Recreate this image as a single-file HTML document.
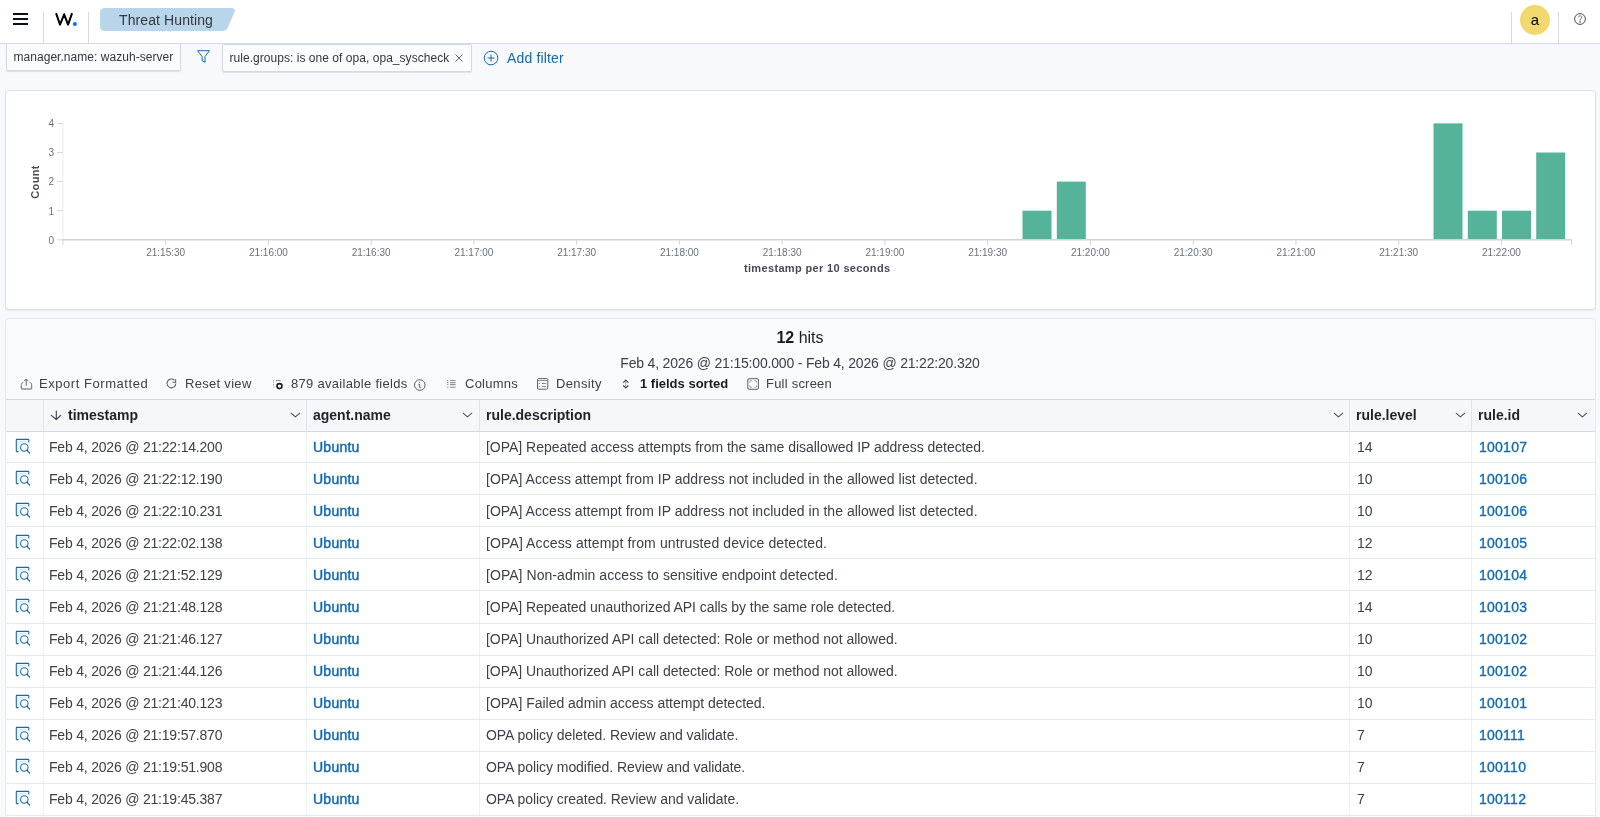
<!DOCTYPE html>
<html><head><meta charset="utf-8"><style>
*{box-sizing:border-box;margin:0;padding:0}
html,body{width:1600px;height:817px;overflow:hidden;background:#f8f9fc;font-family:"Liberation Sans",sans-serif;color:#343741;position:relative}
.abs{position:absolute}
.g,.td,.th,.tb,.pill,#header>div,svg{will-change:transform}
#header{position:absolute;left:0;top:0;width:1600px;height:44px;background:#fff;border-bottom:1px solid #d3dae6}
.vdiv{position:absolute;top:12px;width:1px;height:31px;background:#d3dae6}
.pill{position:absolute;height:28px;background:#fbfcfd;border:1px solid #d3dae6;border-radius:2px;box-shadow:0 1px 1px rgba(0,0,0,.1);font-size:12px;line-height:27px;padding-left:6.5px;color:#343741;white-space:nowrap}
.panel{position:absolute;background:#fff;border:1px solid #dde2ea;border-radius:4px;box-shadow:0 1px 2px rgba(0,0,0,.08)}
.hdr{position:absolute;left:6px;top:399px;width:1589px;height:33px;background:#f5f7fa;border-top:1px solid #d3dae6;border-bottom:1px solid #d3dae6}
.vl{position:absolute;width:1px;background:#e3e8f2}
.hl{position:absolute;left:6px;width:1589px;height:1px;background:#e3e8f2}
.th{position:absolute;height:32px;line-height:32px;font-size:14px;font-weight:700;color:#1f2229;white-space:nowrap}
.chev{position:absolute;width:12px;height:8px}
.td{position:absolute;height:32px;line-height:32px;font-size:14px;color:#3d404a;white-space:nowrap;letter-spacing:-0.05px}
.ts{letter-spacing:-0.2px}
.lnk{color:#0f6ab4;-webkit-text-stroke:0.45px #0f6ab4;letter-spacing:0.25px}
.lnk2{color:#0f6ab4;-webkit-text-stroke:0.35px #0f6ab4;letter-spacing:0.25px}
.ic{position:absolute;width:22px;height:22px}
.tb{position:absolute;top:375px;height:18px;line-height:18px;font-size:13px;color:#3d404a;white-space:nowrap;letter-spacing:0.3px}
</style></head><body>
<div id="header">
  <div class="abs" style="left:13px;top:13px;width:15px;height:2px;background:#07101f"></div>
  <div class="abs" style="left:13px;top:18px;width:15px;height:2px;background:#07101f"></div>
  <div class="abs" style="left:13px;top:23px;width:15px;height:2px;background:#07101f"></div>
  <div class="vdiv" style="left:43px"></div>
  <svg class="abs" style="left:50px;top:8px" width="30" height="22" viewBox="0 0 30 22"><path d="M6.3 5.85L10 16.6 14.15 6.3 18.06 16.6 21.85 5.85" fill="none" stroke="#000" stroke-width="2" stroke-linejoin="round" stroke-linecap="round"/><circle cx="24.9" cy="16" r="2" fill="#0a6cff"/></svg>
  <div class="vdiv" style="left:88px"></div>
  <svg class="abs" style="left:100px;top:8px" width="136" height="23"><path d="M5 0H131Q136 0 134.5 4L128 19Q126.5 23 122 23H5Q0 23 0 18V5Q0 0 5 0Z" fill="#b9d5ea"/></svg>
  <div class="abs" style="left:119px;top:8.5px;line-height:23px;font-size:14px;color:#343741;letter-spacing:0.1px">Threat Hunting</div>
  <div class="vdiv" style="left:1511px"></div>
  <div class="abs" style="left:1519.5px;top:4.5px;width:30px;height:30px;border-radius:50%;background:#f1d86f;text-align:center;line-height:30px;font-size:15px;color:#000">a</div>
  <div class="vdiv" style="left:1558px"></div>
  <svg class="abs" style="left:1573.4px;top:12.4px" width="14" height="14" viewBox="0 0 14 14"><circle cx="7" cy="7" r="5.4" fill="none" stroke="#4a4e58" stroke-width="1"/><path d="M5.5 5.3a1.55 1.55 0 1 1 2.3 1.4c-.5.3-.75.7-.75 1.3v.5" fill="none" stroke="#5a5e68" stroke-width=".9"/><circle cx="7.05" cy="10.1" r=".75" fill="#1a1c21"/></svg>
</div>
<div class="pill" style="left:6px;top:43px;width:175px;letter-spacing:0.04px">manager.name: wazuh-server</div>
<svg class="abs" style="left:196px;top:49px" width="15" height="15" viewBox="0 0 15 15"><path d="M1.5 1.7h12L9 7.5v5.8l-2.9-1.6V7.5z" fill="none" stroke="#0f6ab4" stroke-width="1" stroke-linejoin="round"/></svg>
<div class="pill" style="left:222px;top:44px;width:250px;letter-spacing:0.04px">rule.groups: is one of opa, opa_syscheck</div>
<svg class="abs" style="left:454px;top:52.5px" width="10" height="10" viewBox="0 0 10 10"><path d="M1.5 1.5l7 7M8.5 1.5l-7 7" stroke="#5a5e68" stroke-width=".95"/></svg>
<svg class="abs" style="left:483px;top:49.5px" width="16" height="16" viewBox="0 0 16 16"><circle cx="8" cy="8" r="6.8" fill="none" stroke="#0f6ab4" stroke-width="1"/><path d="M8 4.5v7M4.5 8h7" stroke="#0f6ab4" stroke-width="1"/></svg>
<div class="abs g" style="left:507px;top:49px;font-size:14px;line-height:18px;color:#0f6ab4;letter-spacing:0.15px">Add filter</div>

<div class="panel" style="left:5px;top:90px;width:1591px;height:220px"></div>
<svg width="1600" height="300" style="position:absolute;left:0;top:0" font-family="Liberation Sans, sans-serif"><line x1="62.9" y1="122.4" x2="62.9" y2="239.8" stroke="#ececec" stroke-width="1"/><line x1="57" y1="239.8" x2="62.9" y2="239.8" stroke="#d8d8d8" stroke-width="1"/><text x="54" y="243.6" text-anchor="end" font-size="10" fill="#6a717d">0</text><line x1="57" y1="210.7" x2="62.9" y2="210.7" stroke="#d8d8d8" stroke-width="1"/><text x="54" y="214.5" text-anchor="end" font-size="10" fill="#6a717d">1</text><line x1="57" y1="181.6" x2="62.9" y2="181.6" stroke="#d8d8d8" stroke-width="1"/><text x="54" y="185.4" text-anchor="end" font-size="10" fill="#6a717d">2</text><line x1="57" y1="152.5" x2="62.9" y2="152.5" stroke="#d8d8d8" stroke-width="1"/><text x="54" y="156.3" text-anchor="end" font-size="10" fill="#6a717d">3</text><line x1="57" y1="123.4" x2="62.9" y2="123.4" stroke="#d8d8d8" stroke-width="1"/><text x="54" y="127.2" text-anchor="end" font-size="10" fill="#6a717d">4</text><rect x="1022.5" y="210.7" width="29" height="29.1" fill="#54b399"/><rect x="1056.8" y="181.6" width="29" height="58.2" fill="#54b399"/><rect x="1433.5" y="123.4" width="29" height="116.4" fill="#54b399"/><rect x="1467.8" y="210.7" width="29" height="29.1" fill="#54b399"/><rect x="1502.0" y="210.7" width="29" height="29.1" fill="#54b399"/><rect x="1536.2" y="152.5" width="29" height="87.3" fill="#54b399"/><line x1="62.9" y1="239.8" x2="1571.6" y2="239.8" stroke="#d4d4d4" stroke-width="1.5"/><line x1="62.9" y1="239.8" x2="62.9" y2="244.8" stroke="#d4d4d4" stroke-width="1"/><line x1="1571.6" y1="239.8" x2="1571.6" y2="244.8" stroke="#d4d4d4" stroke-width="1"/><line x1="165.7" y1="239.8" x2="165.7" y2="244.8" stroke="#d4d4d4" stroke-width="1"/><text x="165.7" y="256.0" text-anchor="middle" font-size="10" fill="#6a717d">21:15:30</text><line x1="268.4" y1="239.8" x2="268.4" y2="244.8" stroke="#d4d4d4" stroke-width="1"/><text x="268.4" y="256.0" text-anchor="middle" font-size="10" fill="#6a717d">21:16:00</text><line x1="371.1" y1="239.8" x2="371.1" y2="244.8" stroke="#d4d4d4" stroke-width="1"/><text x="371.1" y="256.0" text-anchor="middle" font-size="10" fill="#6a717d">21:16:30</text><line x1="473.9" y1="239.8" x2="473.9" y2="244.8" stroke="#d4d4d4" stroke-width="1"/><text x="473.9" y="256.0" text-anchor="middle" font-size="10" fill="#6a717d">21:17:00</text><line x1="576.6" y1="239.8" x2="576.6" y2="244.8" stroke="#d4d4d4" stroke-width="1"/><text x="576.6" y="256.0" text-anchor="middle" font-size="10" fill="#6a717d">21:17:30</text><line x1="679.4" y1="239.8" x2="679.4" y2="244.8" stroke="#d4d4d4" stroke-width="1"/><text x="679.4" y="256.0" text-anchor="middle" font-size="10" fill="#6a717d">21:18:00</text><line x1="782.1" y1="239.8" x2="782.1" y2="244.8" stroke="#d4d4d4" stroke-width="1"/><text x="782.1" y="256.0" text-anchor="middle" font-size="10" fill="#6a717d">21:18:30</text><line x1="884.9" y1="239.8" x2="884.9" y2="244.8" stroke="#d4d4d4" stroke-width="1"/><text x="884.9" y="256.0" text-anchor="middle" font-size="10" fill="#6a717d">21:19:00</text><line x1="987.6" y1="239.8" x2="987.6" y2="244.8" stroke="#d4d4d4" stroke-width="1"/><text x="987.6" y="256.0" text-anchor="middle" font-size="10" fill="#6a717d">21:19:30</text><line x1="1090.4" y1="239.8" x2="1090.4" y2="244.8" stroke="#d4d4d4" stroke-width="1"/><text x="1090.4" y="256.0" text-anchor="middle" font-size="10" fill="#6a717d">21:20:00</text><line x1="1193.2" y1="239.8" x2="1193.2" y2="244.8" stroke="#d4d4d4" stroke-width="1"/><text x="1193.2" y="256.0" text-anchor="middle" font-size="10" fill="#6a717d">21:20:30</text><line x1="1295.9" y1="239.8" x2="1295.9" y2="244.8" stroke="#d4d4d4" stroke-width="1"/><text x="1295.9" y="256.0" text-anchor="middle" font-size="10" fill="#6a717d">21:21:00</text><line x1="1398.7" y1="239.8" x2="1398.7" y2="244.8" stroke="#d4d4d4" stroke-width="1"/><text x="1398.7" y="256.0" text-anchor="middle" font-size="10" fill="#6a717d">21:21:30</text><line x1="1501.4" y1="239.8" x2="1501.4" y2="244.8" stroke="#d4d4d4" stroke-width="1"/><text x="1501.4" y="256.0" text-anchor="middle" font-size="10" fill="#6a717d">21:22:00</text><text x="817.2" y="272.2" text-anchor="middle" font-size="11" font-weight="700" fill="#464a55" letter-spacing="0.35">timestamp per 10 seconds</text><text transform="translate(38.5,182) rotate(-90)" text-anchor="middle" font-size="11" font-weight="700" fill="#464a55" letter-spacing="0.3">Count</text></svg>

<div class="panel" style="left:5px;top:318px;width:1591px;height:520px;background:#f9fafc;border-color:#e6e9ef;box-shadow:none;border-radius:4px 4px 0 0"></div>
<div class="abs g" style="left:0;top:328px;width:1600px;text-align:center;font-size:16px;line-height:20px;color:#1a1c21"><b>12</b> hits</div>
<div class="abs g" style="left:0;top:353.5px;width:1600px;text-align:center;font-size:14px;line-height:18px;color:#3d404a;letter-spacing:-0.18px">Feb 4, 2026 @ 21:15:00.000 - Feb 4, 2026 @ 21:22:20.320</div>

<svg class="abs" style="left:16px;top:374px" width="20" height="20" viewBox="0 0 20 20"><path d="M7.3 8.2C6 8.8 5.3 10 5.3 11.5v3a.5.5 0 0 0 .5.5h9.4a.5.5 0 0 0 .5-.5v-3c0-1.5-.7-2.7-2-3.3" fill="none" stroke="#5a5f6b" stroke-width="1"/><path d="M10.2 11.8V5.3M8.2 7l2-2 2 2" fill="none" stroke="#5a5f6b" stroke-width="1" stroke-linejoin="round"/></svg>
<svg class="abs" style="left:162px;top:374px" width="20" height="20" viewBox="0 0 20 20"><path d="M12.4 6.2A4.4 4.4 0 1 0 13.8 9.5" fill="none" stroke="#5a5f6b" stroke-width="1.1"/><path d="M13.6 5.2v3.1h-3" fill="none" stroke="#5a5f6b" stroke-width="1.1"/></svg>
<svg class="abs" style="left:268px;top:374px" width="20" height="20" viewBox="0 0 20 20"><path d="M5 6.5h.8M5 8.6h.8M5 10.7h.8M5 12.9h.8M7.8 6.5h5" stroke="#8a8f99" stroke-width="1"/><circle cx="11.5" cy="12.1" r="2.5" fill="none" stroke="#1a1c21" stroke-width="1.6"/></svg>
<svg class="abs" style="left:410px;top:374px" width="20" height="20" viewBox="0 0 20 20"><circle cx="9.8" cy="11" r="5.3" fill="none" stroke="#5a5f6b" stroke-width="1"/><path d="M8.3 10.3h1.4v3.4h1.1" fill="none" stroke="#5a5f6b" stroke-width="1"/><circle cx="9.7" cy="8.3" r=".6" fill="#5a5f6b"/></svg>
<svg class="abs" style="left:441px;top:374px" width="20" height="20" viewBox="0 0 20 20"><path d="M6 6.5h1.4M9 6.5h5.6M6 8.6h1.4M9 8.6h5.6M6 10.5h1.4M9 10.5h5.6M6 13.3h1.4M9 13.3h5.6" stroke="#8f949e" stroke-width="1.1"/><path d="M9 12h5.6" stroke="#c9ccd3" stroke-width="1"/></svg>
<svg class="abs" style="left:532px;top:374px" width="20" height="20" viewBox="0 0 20 20"><rect x="5.5" y="4.6" width="10.3" height="10.6" rx="1.2" fill="none" stroke="#5a5f6b" stroke-width="1"/><path d="M5.5 6.5h10.3" stroke="#7d828c" stroke-width=".9"/><path d="M6.8 9.5h1.1M9.8 9.5h4.2M6.8 12.5h1.1M9.8 12.5h4.2" stroke="#80858f" stroke-width="1"/></svg>
<svg class="abs" style="left:616px;top:374px" width="20" height="20" viewBox="0 0 20 20"><path d="M7.2 8.6l2.6-2.4 2.6 2.4M7.2 11.5l2.6 2.4 2.6-2.4" fill="none" stroke="#343741" stroke-width="1.1" stroke-linejoin="round"/><path d="M9.8 7v6.2" stroke="#9a9ea6" stroke-width="1"/></svg>
<svg class="abs" style="left:743px;top:374px" width="20" height="20" viewBox="0 0 20 20"><rect x="4.8" y="4.7" width="10.6" height="10.6" rx="1.2" fill="none" stroke="#5a5f6b" stroke-width="1"/><path d="M6.8 8.6V7.6a1 1 0 0 1 1-1h1M11.6 6.6h.9a1 1 0 0 1 1 1v1M13.5 11.4v1a1 1 0 0 1-1 1h-.9M8.8 13.4h-1a1 1 0 0 1-1-1v-1" fill="none" stroke="#8a8f99" stroke-width="1"/></svg>

<div class="tb" style="left:39px;letter-spacing:0.55px">Export Formatted</div>
<div class="tb" style="left:184.8px">Reset view</div>
<div class="tb" style="left:290.5px">879 available fields</div>
<div class="tb" style="left:465px;letter-spacing:0.25px">Columns</div>
<div class="tb" style="left:556px;letter-spacing:0.35px">Density</div>
<div class="tb" style="left:640px;font-weight:700;letter-spacing:0;color:#1a1c21">1 fields sorted</div>
<div class="tb" style="left:766px;letter-spacing:0.22px">Full screen</div>
<div class="abs" style="left:6px;top:432px;width:1589px;height:385px;background:#fff"></div>
<div class="hdr"></div><div class="vl" style="left:43px;top:400px;height:31px;background:#dfe4ee"></div><div class="vl" style="left:43px;top:432px;height:385px;background:#eef1f6"></div><div class="th" style="left:68px;top:399px">timestamp</div><div class="chev" style="left:290px;top:412px"><svg width="12" height="8" viewBox="0 0 12 8" style="position:absolute;left:0;top:0"><path d="M1.2 1.2l4.2 3.7 4.4-3.7" fill="none" stroke="#4a4e58" stroke-width="1.05" stroke-linecap="round" stroke-linejoin="round"/></svg></div><div class="vl" style="left:306px;top:400px;height:31px;background:#dfe4ee"></div><div class="vl" style="left:306px;top:432px;height:385px;background:#eef1f6"></div><div class="th" style="left:312.5px;top:399px">agent.name</div><div class="chev" style="left:462px;top:412px"><svg width="12" height="8" viewBox="0 0 12 8" style="position:absolute;left:0;top:0"><path d="M1.2 1.2l4.2 3.7 4.4-3.7" fill="none" stroke="#4a4e58" stroke-width="1.05" stroke-linecap="round" stroke-linejoin="round"/></svg></div><div class="vl" style="left:479px;top:400px;height:31px;background:#dfe4ee"></div><div class="vl" style="left:479px;top:432px;height:385px;background:#eef1f6"></div><div class="th" style="left:485.5px;top:399px">rule.description</div><div class="chev" style="left:1332.8px;top:412px"><svg width="12" height="8" viewBox="0 0 12 8" style="position:absolute;left:0;top:0"><path d="M1.2 1.2l4.2 3.7 4.4-3.7" fill="none" stroke="#4a4e58" stroke-width="1.05" stroke-linecap="round" stroke-linejoin="round"/></svg></div><div class="vl" style="left:1349px;top:400px;height:31px;background:#dfe4ee"></div><div class="vl" style="left:1349px;top:432px;height:385px;background:#eef1f6"></div><div class="th" style="left:1355.5px;top:399px">rule.level</div><div class="chev" style="left:1454.8px;top:412px"><svg width="12" height="8" viewBox="0 0 12 8" style="position:absolute;left:0;top:0"><path d="M1.2 1.2l4.2 3.7 4.4-3.7" fill="none" stroke="#4a4e58" stroke-width="1.05" stroke-linecap="round" stroke-linejoin="round"/></svg></div><div class="vl" style="left:1471px;top:400px;height:31px;background:#dfe4ee"></div><div class="vl" style="left:1471px;top:432px;height:385px;background:#eef1f6"></div><div class="th" style="left:1477.5px;top:399px">rule.id</div><div class="chev" style="left:1577.3px;top:412px"><svg width="12" height="8" viewBox="0 0 12 8" style="position:absolute;left:0;top:0"><path d="M1.2 1.2l4.2 3.7 4.4-3.7" fill="none" stroke="#4a4e58" stroke-width="1.05" stroke-linecap="round" stroke-linejoin="round"/></svg></div><svg class="abs" style="left:50px;top:410px" width="12" height="11" viewBox="0 0 12 11"><path d="M6.3 1v8.4M1.3 5.3l5 4.2 4.4-4.2" fill="none" stroke="#3f4350" stroke-width="1.1" stroke-linecap="round" stroke-linejoin="round"/></svg><div class="hl" style="top:462px"></div><div class="ic" style="left:12px;top:437px"><svg width="22" height="22" viewBox="0 0 22 22" style="position:absolute;left:0;top:0"><path d="M6.2 14.6H4.8a.5.5 0 0 1-.5-.5V3a.6.6 0 0 1 .6-.6h11.3a.6.6 0 0 1 .6.6v2" fill="none" stroke="#0f6ab4" stroke-width="1.1" stroke-linecap="round"/><path d="M5.5 4.3h9M5.5 6.2h3M5.5 8h2M5.5 10h2M5.5 12h2" stroke="#b5d0ea" stroke-width=".6"/><circle cx="12.3" cy="10.5" r="3.7" fill="none" stroke="#0f6ab4" stroke-width="1.1"/><path d="M15 13.2l2.5 2.8" stroke="#0f6ab4" stroke-width="1.2" stroke-linecap="round"/></svg></div><div class="td ts" style="left:48.8px;top:431px">Feb 4, 2026 @ 21:22:14.200</div><div class="td lnk" style="left:313px;top:431px">Ubuntu</div><div class="td" style="left:486px;top:431px;letter-spacing:-0.023px">[OPA] Repeated access attempts from the same disallowed IP address detected.</div><div class="td" style="left:1357px;top:431px">14</div><div class="td lnk2" style="left:1479px;top:431px">100107</div><div class="hl" style="top:494px"></div><div class="ic" style="left:12px;top:469px"><svg width="22" height="22" viewBox="0 0 22 22" style="position:absolute;left:0;top:0"><path d="M6.2 14.6H4.8a.5.5 0 0 1-.5-.5V3a.6.6 0 0 1 .6-.6h11.3a.6.6 0 0 1 .6.6v2" fill="none" stroke="#0f6ab4" stroke-width="1.1" stroke-linecap="round"/><path d="M5.5 4.3h9M5.5 6.2h3M5.5 8h2M5.5 10h2M5.5 12h2" stroke="#b5d0ea" stroke-width=".6"/><circle cx="12.3" cy="10.5" r="3.7" fill="none" stroke="#0f6ab4" stroke-width="1.1"/><path d="M15 13.2l2.5 2.8" stroke="#0f6ab4" stroke-width="1.2" stroke-linecap="round"/></svg></div><div class="td ts" style="left:48.8px;top:463px">Feb 4, 2026 @ 21:22:12.190</div><div class="td lnk" style="left:313px;top:463px">Ubuntu</div><div class="td" style="left:486px;top:463px;letter-spacing:0.033px">[OPA] Access attempt from IP address not included in the allowed list detected.</div><div class="td" style="left:1357px;top:463px">10</div><div class="td lnk2" style="left:1479px;top:463px">100106</div><div class="hl" style="top:526px"></div><div class="ic" style="left:12px;top:501px"><svg width="22" height="22" viewBox="0 0 22 22" style="position:absolute;left:0;top:0"><path d="M6.2 14.6H4.8a.5.5 0 0 1-.5-.5V3a.6.6 0 0 1 .6-.6h11.3a.6.6 0 0 1 .6.6v2" fill="none" stroke="#0f6ab4" stroke-width="1.1" stroke-linecap="round"/><path d="M5.5 4.3h9M5.5 6.2h3M5.5 8h2M5.5 10h2M5.5 12h2" stroke="#b5d0ea" stroke-width=".6"/><circle cx="12.3" cy="10.5" r="3.7" fill="none" stroke="#0f6ab4" stroke-width="1.1"/><path d="M15 13.2l2.5 2.8" stroke="#0f6ab4" stroke-width="1.2" stroke-linecap="round"/></svg></div><div class="td ts" style="left:48.8px;top:495px">Feb 4, 2026 @ 21:22:10.231</div><div class="td lnk" style="left:313px;top:495px">Ubuntu</div><div class="td" style="left:486px;top:495px;letter-spacing:0.033px">[OPA] Access attempt from IP address not included in the allowed list detected.</div><div class="td" style="left:1357px;top:495px">10</div><div class="td lnk2" style="left:1479px;top:495px">100106</div><div class="hl" style="top:558px"></div><div class="ic" style="left:12px;top:533px"><svg width="22" height="22" viewBox="0 0 22 22" style="position:absolute;left:0;top:0"><path d="M6.2 14.6H4.8a.5.5 0 0 1-.5-.5V3a.6.6 0 0 1 .6-.6h11.3a.6.6 0 0 1 .6.6v2" fill="none" stroke="#0f6ab4" stroke-width="1.1" stroke-linecap="round"/><path d="M5.5 4.3h9M5.5 6.2h3M5.5 8h2M5.5 10h2M5.5 12h2" stroke="#b5d0ea" stroke-width=".6"/><circle cx="12.3" cy="10.5" r="3.7" fill="none" stroke="#0f6ab4" stroke-width="1.1"/><path d="M15 13.2l2.5 2.8" stroke="#0f6ab4" stroke-width="1.2" stroke-linecap="round"/></svg></div><div class="td ts" style="left:48.8px;top:527px">Feb 4, 2026 @ 21:22:02.138</div><div class="td lnk" style="left:313px;top:527px">Ubuntu</div><div class="td" style="left:486px;top:527px;letter-spacing:0.115px">[OPA] Access attempt from untrusted device detected.</div><div class="td" style="left:1357px;top:527px">12</div><div class="td lnk2" style="left:1479px;top:527px">100105</div><div class="hl" style="top:590px"></div><div class="ic" style="left:12px;top:565px"><svg width="22" height="22" viewBox="0 0 22 22" style="position:absolute;left:0;top:0"><path d="M6.2 14.6H4.8a.5.5 0 0 1-.5-.5V3a.6.6 0 0 1 .6-.6h11.3a.6.6 0 0 1 .6.6v2" fill="none" stroke="#0f6ab4" stroke-width="1.1" stroke-linecap="round"/><path d="M5.5 4.3h9M5.5 6.2h3M5.5 8h2M5.5 10h2M5.5 12h2" stroke="#b5d0ea" stroke-width=".6"/><circle cx="12.3" cy="10.5" r="3.7" fill="none" stroke="#0f6ab4" stroke-width="1.1"/><path d="M15 13.2l2.5 2.8" stroke="#0f6ab4" stroke-width="1.2" stroke-linecap="round"/></svg></div><div class="td ts" style="left:48.8px;top:559px">Feb 4, 2026 @ 21:21:52.129</div><div class="td lnk" style="left:313px;top:559px">Ubuntu</div><div class="td" style="left:486px;top:559px;letter-spacing:0.050px">[OPA] Non-admin access to sensitive endpoint detected.</div><div class="td" style="left:1357px;top:559px">12</div><div class="td lnk2" style="left:1479px;top:559px">100104</div><div class="hl" style="top:623px"></div><div class="ic" style="left:12px;top:597px"><svg width="22" height="22" viewBox="0 0 22 22" style="position:absolute;left:0;top:0"><path d="M6.2 14.6H4.8a.5.5 0 0 1-.5-.5V3a.6.6 0 0 1 .6-.6h11.3a.6.6 0 0 1 .6.6v2" fill="none" stroke="#0f6ab4" stroke-width="1.1" stroke-linecap="round"/><path d="M5.5 4.3h9M5.5 6.2h3M5.5 8h2M5.5 10h2M5.5 12h2" stroke="#b5d0ea" stroke-width=".6"/><circle cx="12.3" cy="10.5" r="3.7" fill="none" stroke="#0f6ab4" stroke-width="1.1"/><path d="M15 13.2l2.5 2.8" stroke="#0f6ab4" stroke-width="1.2" stroke-linecap="round"/></svg></div><div class="td ts" style="left:48.8px;top:591px">Feb 4, 2026 @ 21:21:48.128</div><div class="td lnk" style="left:313px;top:591px">Ubuntu</div><div class="td" style="left:486px;top:591px;letter-spacing:-0.050px">[OPA] Repeated unauthorized API calls by the same role detected.</div><div class="td" style="left:1357px;top:591px">14</div><div class="td lnk2" style="left:1479px;top:591px">100103</div><div class="hl" style="top:655px"></div><div class="ic" style="left:12px;top:629px"><svg width="22" height="22" viewBox="0 0 22 22" style="position:absolute;left:0;top:0"><path d="M6.2 14.6H4.8a.5.5 0 0 1-.5-.5V3a.6.6 0 0 1 .6-.6h11.3a.6.6 0 0 1 .6.6v2" fill="none" stroke="#0f6ab4" stroke-width="1.1" stroke-linecap="round"/><path d="M5.5 4.3h9M5.5 6.2h3M5.5 8h2M5.5 10h2M5.5 12h2" stroke="#b5d0ea" stroke-width=".6"/><circle cx="12.3" cy="10.5" r="3.7" fill="none" stroke="#0f6ab4" stroke-width="1.1"/><path d="M15 13.2l2.5 2.8" stroke="#0f6ab4" stroke-width="1.2" stroke-linecap="round"/></svg></div><div class="td ts" style="left:48.8px;top:623px">Feb 4, 2026 @ 21:21:46.127</div><div class="td lnk" style="left:313px;top:623px">Ubuntu</div><div class="td" style="left:486px;top:623px;letter-spacing:-0.034px">[OPA] Unauthorized API call detected: Role or method not allowed.</div><div class="td" style="left:1357px;top:623px">10</div><div class="td lnk2" style="left:1479px;top:623px">100102</div><div class="hl" style="top:687px"></div><div class="ic" style="left:12px;top:661px"><svg width="22" height="22" viewBox="0 0 22 22" style="position:absolute;left:0;top:0"><path d="M6.2 14.6H4.8a.5.5 0 0 1-.5-.5V3a.6.6 0 0 1 .6-.6h11.3a.6.6 0 0 1 .6.6v2" fill="none" stroke="#0f6ab4" stroke-width="1.1" stroke-linecap="round"/><path d="M5.5 4.3h9M5.5 6.2h3M5.5 8h2M5.5 10h2M5.5 12h2" stroke="#b5d0ea" stroke-width=".6"/><circle cx="12.3" cy="10.5" r="3.7" fill="none" stroke="#0f6ab4" stroke-width="1.1"/><path d="M15 13.2l2.5 2.8" stroke="#0f6ab4" stroke-width="1.2" stroke-linecap="round"/></svg></div><div class="td ts" style="left:48.8px;top:655px">Feb 4, 2026 @ 21:21:44.126</div><div class="td lnk" style="left:313px;top:655px">Ubuntu</div><div class="td" style="left:486px;top:655px;letter-spacing:-0.034px">[OPA] Unauthorized API call detected: Role or method not allowed.</div><div class="td" style="left:1357px;top:655px">10</div><div class="td lnk2" style="left:1479px;top:655px">100102</div><div class="hl" style="top:719px"></div><div class="ic" style="left:12px;top:693px"><svg width="22" height="22" viewBox="0 0 22 22" style="position:absolute;left:0;top:0"><path d="M6.2 14.6H4.8a.5.5 0 0 1-.5-.5V3a.6.6 0 0 1 .6-.6h11.3a.6.6 0 0 1 .6.6v2" fill="none" stroke="#0f6ab4" stroke-width="1.1" stroke-linecap="round"/><path d="M5.5 4.3h9M5.5 6.2h3M5.5 8h2M5.5 10h2M5.5 12h2" stroke="#b5d0ea" stroke-width=".6"/><circle cx="12.3" cy="10.5" r="3.7" fill="none" stroke="#0f6ab4" stroke-width="1.1"/><path d="M15 13.2l2.5 2.8" stroke="#0f6ab4" stroke-width="1.2" stroke-linecap="round"/></svg></div><div class="td ts" style="left:48.8px;top:687px">Feb 4, 2026 @ 21:21:40.123</div><div class="td lnk" style="left:313px;top:687px">Ubuntu</div><div class="td" style="left:486px;top:687px;letter-spacing:-0.010px">[OPA] Failed admin access attempt detected.</div><div class="td" style="left:1357px;top:687px">10</div><div class="td lnk2" style="left:1479px;top:687px">100101</div><div class="hl" style="top:751px"></div><div class="ic" style="left:12px;top:725px"><svg width="22" height="22" viewBox="0 0 22 22" style="position:absolute;left:0;top:0"><path d="M6.2 14.6H4.8a.5.5 0 0 1-.5-.5V3a.6.6 0 0 1 .6-.6h11.3a.6.6 0 0 1 .6.6v2" fill="none" stroke="#0f6ab4" stroke-width="1.1" stroke-linecap="round"/><path d="M5.5 4.3h9M5.5 6.2h3M5.5 8h2M5.5 10h2M5.5 12h2" stroke="#b5d0ea" stroke-width=".6"/><circle cx="12.3" cy="10.5" r="3.7" fill="none" stroke="#0f6ab4" stroke-width="1.1"/><path d="M15 13.2l2.5 2.8" stroke="#0f6ab4" stroke-width="1.2" stroke-linecap="round"/></svg></div><div class="td ts" style="left:48.8px;top:719px">Feb 4, 2026 @ 21:19:57.870</div><div class="td lnk" style="left:313px;top:719px">Ubuntu</div><div class="td" style="left:486px;top:719px;letter-spacing:-0.050px">OPA policy deleted. Review and validate.</div><div class="td" style="left:1357px;top:719px">7</div><div class="td lnk2" style="left:1479px;top:719px">100111</div><div class="hl" style="top:783px"></div><div class="ic" style="left:12px;top:757px"><svg width="22" height="22" viewBox="0 0 22 22" style="position:absolute;left:0;top:0"><path d="M6.2 14.6H4.8a.5.5 0 0 1-.5-.5V3a.6.6 0 0 1 .6-.6h11.3a.6.6 0 0 1 .6.6v2" fill="none" stroke="#0f6ab4" stroke-width="1.1" stroke-linecap="round"/><path d="M5.5 4.3h9M5.5 6.2h3M5.5 8h2M5.5 10h2M5.5 12h2" stroke="#b5d0ea" stroke-width=".6"/><circle cx="12.3" cy="10.5" r="3.7" fill="none" stroke="#0f6ab4" stroke-width="1.1"/><path d="M15 13.2l2.5 2.8" stroke="#0f6ab4" stroke-width="1.2" stroke-linecap="round"/></svg></div><div class="td ts" style="left:48.8px;top:751px">Feb 4, 2026 @ 21:19:51.908</div><div class="td lnk" style="left:313px;top:751px">Ubuntu</div><div class="td" style="left:486px;top:751px;letter-spacing:-0.050px">OPA policy modified. Review and validate.</div><div class="td" style="left:1357px;top:751px">7</div><div class="td lnk2" style="left:1479px;top:751px">100110</div><div class="hl" style="top:815px"></div><div class="ic" style="left:12px;top:789px"><svg width="22" height="22" viewBox="0 0 22 22" style="position:absolute;left:0;top:0"><path d="M6.2 14.6H4.8a.5.5 0 0 1-.5-.5V3a.6.6 0 0 1 .6-.6h11.3a.6.6 0 0 1 .6.6v2" fill="none" stroke="#0f6ab4" stroke-width="1.1" stroke-linecap="round"/><path d="M5.5 4.3h9M5.5 6.2h3M5.5 8h2M5.5 10h2M5.5 12h2" stroke="#b5d0ea" stroke-width=".6"/><circle cx="12.3" cy="10.5" r="3.7" fill="none" stroke="#0f6ab4" stroke-width="1.1"/><path d="M15 13.2l2.5 2.8" stroke="#0f6ab4" stroke-width="1.2" stroke-linecap="round"/></svg></div><div class="td ts" style="left:48.8px;top:783px">Feb 4, 2026 @ 21:19:45.387</div><div class="td lnk" style="left:313px;top:783px">Ubuntu</div><div class="td" style="left:486px;top:783px;letter-spacing:-0.050px">OPA policy created. Review and validate.</div><div class="td" style="left:1357px;top:783px">7</div><div class="td lnk2" style="left:1479px;top:783px">100112</div>
</body></html>
